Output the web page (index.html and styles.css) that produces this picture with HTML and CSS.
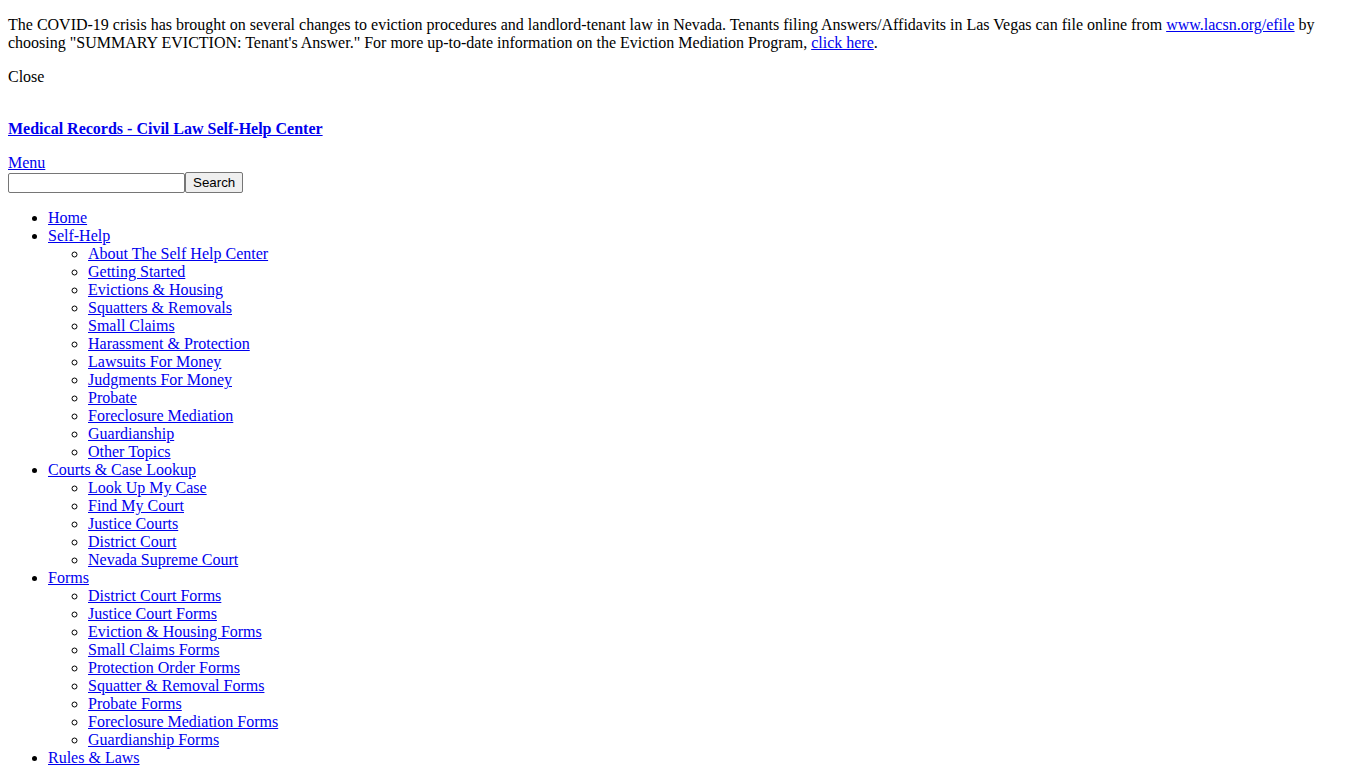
FILE: index.html
```html
<!DOCTYPE html>
<html lang="en">
<head>
<meta charset="utf-8">
<title>Medical Records - Civil Law Self-Help Center</title>
<link rel="stylesheet" href="styles.css">
</head>
<body class="page">
<div class="notice">
  <p class="notice-text">The COVID-19 crisis has brought on several changes to eviction procedures and landlord-tenant law in Nevada. Tenants filing Answers/Affidavits in Las Vegas can file online from <a href="#">www.lacsn.org/efile</a> by choosing "SUMMARY EVICTION: Tenant's Answer." For more up-to-date information on the Eviction Mediation Program, <a href="#">click here</a>.</p>
  <p class="notice-close">Close</p>
</div>
<header class="site-header">
  <h1 class="site-title"><a href="#">Medical Records - Civil Law Self-Help Center</a></h1>
  <div class="menu-toggle"><a href="#">Menu</a></div>
  <form class="search-form">
    <input class="search-input" type="text"><button class="search-button" type="button">Search</button>
  </form>
</header>
<nav class="main-nav">
  <ul class="nav-list">
    <li><a href="#">Home</a></li>
    <li><a href="#">Self-Help</a>
      <ul class="sub-list">
        <li><a href="#">About The Self Help Center</a></li>
        <li><a href="#">Getting Started</a></li>
        <li><a href="#">Evictions &amp; Housing</a></li>
        <li><a href="#">Squatters &amp; Removals</a></li>
        <li><a href="#">Small Claims</a></li>
        <li><a href="#">Harassment &amp; Protection</a></li>
        <li><a href="#">Lawsuits For Money</a></li>
        <li><a href="#">Judgments For Money</a></li>
        <li><a href="#">Probate</a></li>
        <li><a href="#">Foreclosure Mediation</a></li>
        <li><a href="#">Guardianship</a></li>
        <li><a href="#">Other Topics</a></li>
      </ul>
    </li>
    <li><a href="#">Courts &amp; Case Lookup</a>
      <ul class="sub-list">
        <li><a href="#">Look Up My Case</a></li>
        <li><a href="#">Find My Court</a></li>
        <li><a href="#">Justice Courts</a></li>
        <li><a href="#">District Court</a></li>
        <li><a href="#">Nevada Supreme Court</a></li>
      </ul>
    </li>
    <li><a href="#">Forms</a>
      <ul class="sub-list">
        <li><a href="#">District Court Forms</a></li>
        <li><a href="#">Justice Court Forms</a></li>
        <li><a href="#">Eviction &amp; Housing Forms</a></li>
        <li><a href="#">Small Claims Forms</a></li>
        <li><a href="#">Protection Order Forms</a></li>
        <li><a href="#">Squatter &amp; Removal Forms</a></li>
        <li><a href="#">Probate Forms</a></li>
        <li><a href="#">Foreclosure Mediation Forms</a></li>
        <li><a href="#">Guardianship Forms</a></li>
      </ul>
    </li>
    <li><a href="#">Rules &amp; Laws</a>
      <ul class="sub-list">
        <li><a href="#">Nevada Revised Statutes</a></li>
        <li><a href="#">Court Rules</a></li>
      </ul>
    </li>
  </ul>
</nav>
</body>
</html>
```
FILE: styles.css
```css
html {
  margin: 0;
  padding: 0;
}
.page {
  margin: 0;
  padding: 8px;
  font-family: "Liberation Serif", "Times New Roman", serif;
  font-size: 16px;
  color: #000;
  background: #fff;
}
.page a {
  color: #0000ee;
  text-decoration: underline;
}
.notice-text {
  margin: 8px 0 16px;
}
.notice-close {
  margin: 16px 0;
}
.site-title {
  margin: 34px 0 16px;
  font-size: 16px;
  font-weight: bold;
}
.menu-toggle {
  margin: 0;
}
.search-form {
  margin: 0;
}
.search-input {
  font-family: "Liberation Sans", Arial, sans-serif;
  font-size: 13.33px;
  width: 177px;
  height: 20px;
  box-sizing: border-box;
  margin: 0;
  border: 1px solid #767676;
  border-radius: 2px;
  vertical-align: baseline;
}
.search-button {
  font-family: "Liberation Sans", Arial, sans-serif;
  font-size: 13.33px;
  margin: 0;
  height: 21px;
  padding: 1px 7px;
  background: #efefef;
  border: 1px solid #767676;
  border-radius: 2px;
  color: #000;
}
.nav-list {
  margin: 16px 0;
  padding-left: 40px;
  list-style: disc;
}
.sub-list {
  margin: 0;
  padding-left: 40px;
  list-style: circle;
}
```
